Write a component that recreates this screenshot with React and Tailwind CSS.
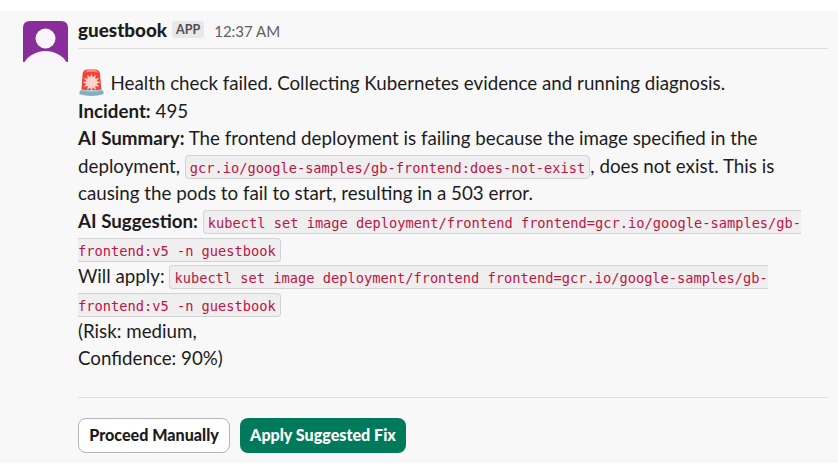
const codeBase = "border-[#d3d3d3] bg-[#efefef] font-['DejaVu_Sans_Mono',monospace] text-[13.7px] leading-none text-[#c01343]";

function Code({ children }) {
  return <code className={`${codeBase} rounded-[4px] border px-[4px] pt-[4px] pb-[2px] align-[-0.4px]`}>{children}</code>;
}

// A command that wraps over two lines, open at the line break.
function WrappedCode({ first, second }) {
  return (
    <>
      <code className={`${codeBase} rounded-l-[4px] border-y border-l pt-[4px] pb-[2px] pl-[4px] align-[-0.4px]`}>{first}</code>
      <br />
      <code className={`${codeBase} rounded-r-[4px] border-y border-r pt-[4px] pr-[4px] pb-[2px] align-[-1px]`}>{second}</code>
    </>
  );
}

function Avatar() {
  return (
    <svg className="mt-[10px] mr-[10px] h-[45px] w-[45px] shrink-0" viewBox="0 0 45 45">
      <path d="M7 0H38Q45 0 45 7V41H0V7Q0 0 7 0Z" fill="#882d9a" />
      <circle cx="22.5" cy="17.5" r="10" fill="#faf5fc" />
      <path d="M1.5 41C6 34 14 30 22.5 30S39 34 43.5 41Q41 45 37 45H8Q4 45 1.5 41Z" fill="#faf5fc" />
    </svg>
  );
}

function Siren() {
  return (
    <svg className="mr-[5.5px] inline-block h-[27px] w-[27px] align-[-6px]" viewBox="0 0 27 27" aria-label="Police light">
      <path d="M3.4 21 4.6 5Q4.9 .5 9.5 .5H17Q21.7 .5 22 5L23.4 21Z" fill="#f44336" />
      <path d="M7 3.4Q8 1 11 1H16Q19 1 20 3.4Q14 2.3 7 3.4Z" fill="#ff8a78" />
      <path d="m13.5 4.5 1.4 3.8 3-2.6-.7 4 4.1-.7-2.7 3 3.7 1.4-3.7 1.4 2.7 3-4.1-.7.7 4-3-2.6-1.4 3.8-1.4-3.8-3 2.6.7-4-4.1.7 2.7-3-3.7-1.4L8.4 12 5.7 9l4.1.7-.7-4 3 2.6Z" fill="#ffd3c9" />
      <path d="M3.5 20.5Q13.5 23 23.5 20.5L25.5 22.5V25.3Q13.5 28.5 1.5 25.3V22.5Z" fill="#82aec0" />
      <path d="M3.5 20.2Q13.5 22.8 23.5 20.2L24.3 21.4Q13.5 24 2.7 21.4Z" fill="#a3c9d8" />
    </svg>
  );
}

export default function App() {
  return (
    <div className="h-[474px] w-[838px] overflow-hidden bg-white pt-[11px] font-[Lato,sans-serif] text-[#1d1c1d]">
      <div className="flex h-[452px] bg-[#f8f8f8] pr-[10px] pl-[23px]">
        <Avatar />
        <div className="min-w-0 grow">
          <header className="flex h-[38px] items-center border-b border-[#dddddd]">
            <span className="pt-[2px] text-[18.85px] font-black">guestbook</span>
            <span className="ml-[5px] flex h-[17px] items-center rounded-[3px] bg-[#e8e8e8] px-[4px] pt-px text-[12.5px] font-bold text-[#4f4e4f]">APP</span>
            <time className="ml-[10px] pt-[3px] text-[15px] text-[#616061]">12:37 AM</time>
          </header>
          <main className="mt-[20px] h-[303px] text-[18.75px] leading-[27.5px]">
            <p className="h-[27.5px] whitespace-nowrap"><Siren />Health check failed. Collecting Kubernetes evidence and running diagnosis.</p>
            <p><b>Incident:</b> 495</p>
            <p><b>AI Summary:</b> The frontend deployment is failing because the image specified in the deployment, <Code>gcr.io/google-samples/gb-frontend:does-not-exist</Code>, does not exist. This is causing the pods to fail to start, resulting in a 503 error.</p>
            <p><b>AI Suggestion:</b> <WrappedCode first="kubectl set image deployment/frontend frontend=gcr.io/google-samples/gb-" second="frontend:v5 -n guestbook" /></p>
            <p>Will apply: <WrappedCode first="kubectl set image deployment/frontend frontend=gcr.io/google-samples/gb-" second="frontend:v5 -n guestbook" /></p>
            <p>(Risk: medium,</p>
            <p>Confidence: 90%)</p>
          </main>
          <footer className="mt-[25px] flex gap-[10px] border-t border-[#dddddd] pt-[20px]">
            <button className="h-[35px] w-[152px] rounded-[8px] border border-[#b6b6b6] bg-white text-[16.1px] font-black whitespace-nowrap">Proceed Manually</button>
            <button className="h-[35px] w-[166px] rounded-[8px] bg-[#007a5a] text-[16.1px] font-black whitespace-nowrap text-white">Apply Suggested Fix</button>
          </footer>
        </div>
      </div>
    </div>
  );
}
